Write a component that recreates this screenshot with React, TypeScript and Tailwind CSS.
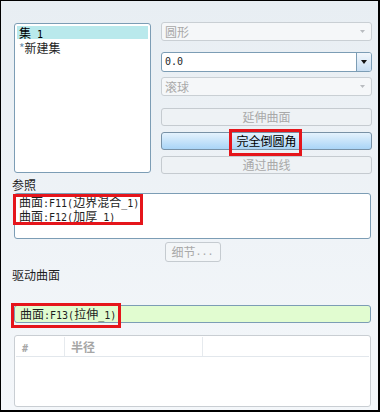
import React from "react";

const L = ({ children }: { children: React.ReactNode }) => (
  <span className="font-['DejaVu_Sans_Mono',monospace] text-[10px] leading-[10px]">{children}</span>
);

const Tri = ({ color, w = 6, h = 4 }: { color: string; w?: number; h?: number }) => (
  <svg width={w} height={h} viewBox={`0 0 ${w} ${h}`}>
    <path d={`M0 0H${w}L${w / 2} ${h}Z`} fill={color} />
  </svg>
);

const DisabledCombo = ({ text }: { text: string }) => (
  <div className="h-[19px] flex items-center justify-between rounded-[3px] border border-[#c9cfd4] bg-[#f5f7f9] pl-[3px] pr-[6px] text-[#a8a8a8] leading-[17px]">
    <span>{text}</span>
    <Tri color="#b9bcc0" w={5} h={3} />
  </div>
);

const DisabledButton = ({ text, className = "" }: { text: string; className?: string }) => (
  <div
    className={`h-[18px] flex items-center justify-center rounded-[3px] border border-[#c5cbd0] bg-[#eef2f5] text-[#a9a9a9] leading-[16px] ${className}`}
  >
    {text}
  </div>
);

export default function App() {
  return (
    <div className="relative w-[380px] h-[412px] box-border border-t border-l border-r-2 border-b-2 border-black bg-gradient-to-b from-[#e8eef3] to-[#f4f7fa] font-['Noto_Sans_CJK_SC',sans-serif] text-[12px] text-[#1e1e1e] pl-[13px] pr-[6px] pt-[21px] overflow-hidden">
      {/* top section */}
      <div className="flex gap-[10px]">
        <div className="w-[137px] h-[150px] mt-[1px] rounded-[3px] border border-[#7c9db5] bg-white px-[2px] pt-[2px]">
          <div className="h-[13px] leading-[13px] bg-[#b9e9ec] pl-[2px] text-black whitespace-nowrap">
            集<span className="inline-block w-[6px]" />
            <L>1</L>
          </div>
          <div className="h-[14px] leading-[14px] mt-[2px] pl-[2px] whitespace-nowrap">
            <span className="text-[#6d8fb0]">*</span>新建集
          </div>
        </div>
        <div className="flex-1 flex flex-col">
          <DisabledCombo text="圆形" />
          <div className="mt-[11px] h-[20px] flex rounded-[3px] border border-[#7c9db5] bg-white overflow-hidden">
            <div className="flex-1 flex items-center pl-[3px] leading-[18px]">
              <L>0.0</L>
            </div>
            <div className="w-[15px] border-l border-[#7c9db5] bg-gradient-to-b from-[#f2f7fc] to-[#c8def2] flex items-center justify-center">
              <Tri color="#111111" w={6} h={4} />
            </div>
          </div>
          <div className="mt-[5px]">
            <DisabledCombo text="滚球" />
          </div>
          <DisabledButton text="延伸曲面" className="mt-[12px]" />
          <div className="mt-[6px] h-[18px] flex items-center justify-center rounded-[3px] border border-[#7891a6] bg-gradient-to-b from-[#e4f2fd] to-[#a9d4f6] text-black leading-[16px]">
            完全倒圆角
          </div>
          <DisabledButton text="通过曲线" className="mt-[6px]" />
        </div>
      </div>

      {/* 参照 */}
      <div className="mt-[3px] h-[16px] leading-[16px] -ml-[2px]">参照</div>
      <div className="mr-[1px] h-[46px] rounded-[3px] border border-[#7c9db5] bg-white pl-[4px] pt-[1px]">
        <div className="h-[14px] leading-[14px] whitespace-nowrap">
          曲面<L>:F11(</L>边界混合<L>_1)</L>
        </div>
        <div className="h-[14px] leading-[14px] whitespace-nowrap">
          曲面<L>:F12(</L>加厚<L>_1)</L>
        </div>
      </div>
      <div className="mt-[3px] flex justify-center mr-[1px]">
        <div className="w-[56px] h-[20px] flex items-center justify-center rounded-[3px] border border-[#c5cbd0] bg-[#f3f6f8] text-[#a9a9a9] leading-[18px]">
          细节<L>...</L>
        </div>
      </div>

      {/* 驱动曲面 */}
      <div className="mt-[5px] h-[16px] leading-[16px] -ml-[2px]">驱动曲面</div>
      <div className="mt-[22px] mr-[1px] h-[18px] flex items-center rounded-[3px] border border-[#7c9db5] bg-[#e1fcd0] pl-[5px] leading-[16px] whitespace-nowrap">
        <span>
          曲面<L>:F13(</L>拉伸<L>_1)</L>
        </span>
      </div>

      {/* table */}
      <div className="mt-[12px] mr-[1px] h-[72px] rounded-[3px] border border-[#c9ced3] bg-white px-[1px] pt-[1px]">
        <div className="flex h-[20px] border-b border-[#e2e7ec] text-[#a6a6a6] font-bold leading-[19px]">
          <div className="w-[49px] border-r border-[#e6eaee] pl-[6px]">
            <L>#</L>
          </div>
          <div className="w-[138px] border-r border-[#e6eaee] pl-[6px]">半径</div>
          <div className="flex-1" />
        </div>
      </div>

      {/* annotation boxes */}
      <div className="absolute left-[228px] top-[128px] w-[73px] h-[27px] border-[3px] border-[#e5151b] pointer-events-none" />
      <div className="absolute left-[12px] top-[193px] w-[130px] h-[31px] border-[3px] border-[#e5151b] pointer-events-none" />
      <div className="absolute left-[10px] top-[302px] w-[110px] h-[25px] border-[3px] border-[#e5151b] pointer-events-none" />
    </div>
  );
}
